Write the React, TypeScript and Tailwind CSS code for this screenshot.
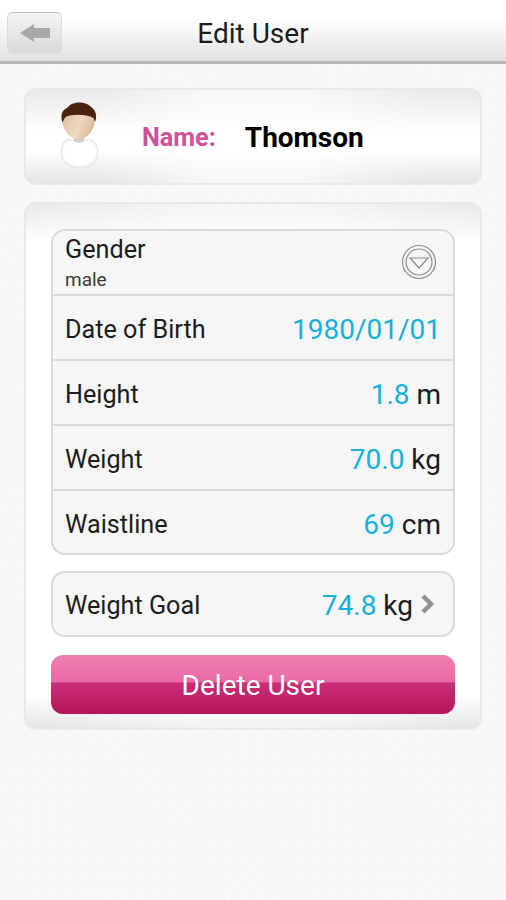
import React from 'react';

interface Measurement {
  label: string;
  value: string;
  unit?: string;
}

const measurements: Measurement[] = [
  { label: 'Date of Birth', value: '1980/01/01' },
  { label: 'Height', value: '1.8', unit: 'm' },
  { label: 'Weight', value: '70.0', unit: 'kg' },
  { label: 'Waistline', value: '69', unit: 'cm' },
];

const Avatar = () => (
  <svg width="44" height="70" viewBox="0 0 44 70" className="shrink-0">
    <defs>
      <linearGradient id="skin" x1="0" x2="1" y1="0" y2="0.3">
        <stop offset="0" stopColor="#dfbf9e" />
        <stop offset="0.6" stopColor="#efd8bf" />
        <stop offset="1" stopColor="#dcbd9d" />
      </linearGradient>
      <radialGradient id="shirt" cx="0.5" cy="0.45" r="0.6">
        <stop offset="0.7" stopColor="#ffffff" />
        <stop offset="1" stopColor="#e4e4e4" />
      </radialGradient>
    </defs>
    <path d="M11 37Q22 42 33 37Q41 40 41 50Q41 66 22.500 66Q4 66 4 50Q4 40 11 37Z" fill="url(#shirt)" stroke="#e6e6e6" />
    <path d="M16 35h12l-1 4q-5 4-10 0z" fill="#d6cdc3" />
    <path d="M5.500 15C4 28 13 37 21.500 37C30 37 39 28 37.500 15Q22 6 5.500 15Z" fill="url(#skin)" />
    <path d="M5.500 20.500C3 14 5 8 10 6C15 -1 28 -1 33 4C39 8 40.500 14 38 20L36.500 16C29 12 15 12 8.500 15Q7 17 5.500 20.500Z" fill="#4c2210" />
  </svg>
);

const ListRow: React.FC<Measurement> = ({ label, value, unit }) => (
  <div className="flex h-[65px] items-center justify-between border-t-2 border-[#dadada] pt-1 pr-3 pl-3">
    <span className="pt-px">{label}</span>
    <span className="text-[28px] whitespace-pre">
      <span className="text-[#13b0dc]">{value}</span>
      {unit && ` ${unit}`}
    </span>
  </div>
);

const App: React.FC = () => {
  return (
    <div className="min-h-[900px] w-full bg-[#fafafa] bg-[repeating-linear-gradient(45deg,#f5f5f5_0_1px,transparent_1px_3px),repeating-linear-gradient(-45deg,#f6f6f6_0_1px,transparent_1px_3px)] font-[Roboto,sans-serif] text-[25.2px] text-[#1c1c1c]">
      <header className="grid h-16 grid-cols-[62px_1fr_62px] items-center border-b-[3px] border-[#b8b8b8] bg-linear-to-b from-white from-30% to-[#e2e2e2]">
        <button type="button" className="mt-1 ml-[7px] flex h-[42px] w-[55px] items-center justify-center rounded-md border border-[#dcdcdc] border-t-[#bdbdbd] bg-linear-to-b from-[#f5f5f5] to-[#d9d9d9]">
          <svg width="30" height="20" viewBox="0 0 30 20" fill="#a8a8a8">
            <path d="M0 10L14 1V5H30V15H14V19Z" />
          </svg>
        </button>
        <h1 className="pt-[7px] text-center text-[28px]">Edit User</h1>
      </header>

      <main className="flex flex-col gap-[17px] px-6 pt-6">
        <section className="flex h-[97px] items-center rounded-xl border-2 border-[#e9e9e9] bg-[linear-gradient(to_right,transparent_15%,#ffffffb0_40%,#ffffffb0_60%,transparent_90%),linear-gradient(to_bottom,#e9e9e9,#ffffff_45%,#ffffff_65%,#e4e4e4)] pl-[31px] font-bold">
          <Avatar />
          <span className="ml-[41px] pt-[2px] text-[#d05099]">Name:</span>
          <span className="ml-[29px] pt-[2px] text-[28px] text-black">Thomson</span>
        </section>

        <section className="h-[528px] rounded-xl border-2 border-[#e9e9e9] bg-[linear-gradient(to_right,transparent,#ffffff90_40%,#ffffff90_60%,transparent),linear-gradient(to_bottom,#e9e9e9,#ffffff_7%,#ffffff_94%,#e4e4e4)] px-[25px] pt-[25px]">
          <div className="h-[326px] overflow-hidden rounded-[14px] border-2 border-[#dadada] bg-[#f6f6f6]">
            <div className="flex h-[63px] items-center justify-between pr-[16px] pl-3">
              <div className="flex flex-col">
                <span className="leading-[34px]">Gender</span>
                <span className="text-[19px] leading-[25px] text-[#3a3a3a]">male</span>
              </div>
              <svg width="36" height="36" viewBox="0 0 36 36" fill="none" stroke="#8c8c8c" strokeWidth="1.200" className="-mt-[2px]">
                <circle cx="18" cy="18" r="16.500" />
                <circle cx="18" cy="18" r="13" />
                <path d="M9 14H27L18 24Z" />
              </svg>
            </div>
            {measurements.map((item) => (
              <ListRow key={item.label} {...item} />
            ))}
          </div>

          <div className="mt-4 flex h-[66px] items-center justify-between rounded-[14px] border-2 border-[#dadada] bg-[#f6f6f6] pr-[18px] pl-3">
            <span className="pt-[3px]">Weight Goal</span>
            <div className="flex items-center gap-2">
              <span className="pt-[3px] text-[28px]">
                <span className="text-[#13b0dc]">74.8</span> kg
              </span>
              <svg width="14" height="20" viewBox="0 0 14 20" fill="none" stroke="#929292" strokeWidth="4.500">
                <path d="M2 2L10 10L2 18" />
              </svg>
            </div>
          </div>

          <button type="button" className="mt-[18px] flex h-[59px] w-full items-center justify-center rounded-[12px] bg-[linear-gradient(to_bottom,#ef7fb1,#ec69a5_46%,#c92e78_47%,#b5165a)] pt-[3px] text-[28px] text-white">
            Delete User
          </button>
        </section>
      </main>
    </div>
  );
};

export default App;
